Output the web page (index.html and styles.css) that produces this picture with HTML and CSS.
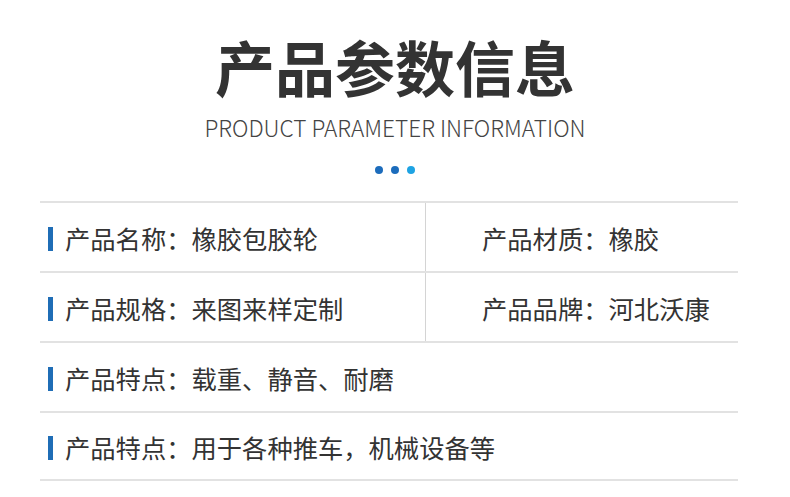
FILE: index.html
```html
<!DOCTYPE html>
<html lang="zh-CN">
<head>
<meta charset="utf-8">
<link rel="stylesheet" href="styles.css">
</head>
<body>
<div class="page">
  <header class="head">
    <h1 class="title">产品参数信息</h1>
    <p class="subtitle">PRODUCT PARAMETER INFORMATION</p>
    <div class="dots"><span class="dot"></span><span class="dot"></span><span class="dot light"></span></div>
  </header>
  <div class="table">
    <div class="row split">
      <div class="cell"><span class="bar"></span><span class="txt">产品名称：橡胶包胶轮</span></div>
      <div class="cell right"><span class="txt">产品材质：橡胶</span></div>
    </div>
    <div class="row split">
      <div class="cell"><span class="bar"></span><span class="txt">产品规格：来图来样定制</span></div>
      <div class="cell right"><span class="txt">产品品牌：河北沃康</span></div>
    </div>
    <div class="row">
      <div class="cell"><span class="bar"></span><span class="txt">产品特点：载重、静音、耐磨</span></div>
    </div>
    <div class="row last">
      <div class="cell"><span class="bar"></span><span class="txt">产品特点：用于各种推车，机械设备等</span></div>
    </div>
  </div>
</div>
</body>
</html>
```

FILE: styles.css
```css
* { box-sizing: border-box; }
html, body { margin: 0; padding: 0; background: #fff; }
body { font-family: "Noto Sans CJK SC", "Noto Sans", sans-serif; color: #333; }
.page { width: 790px; height: 497px; overflow: hidden; }
.head { display: flex; flex-direction: column; align-items: center; padding-top: 36px; }
.title { margin: 0; font-size: 60px; line-height: 60px; font-weight: 700; color: #333; letter-spacing: 0; }
.subtitle { margin: 21px 0 0; font-size: 22.6px; line-height: 21px; font-weight: 300; color: #444; letter-spacing: 0; }
.dots { display: flex; gap: 8px; margin-top: 28px; }
.dot { width: 8px; height: 8px; border-radius: 50%; background: #1c6cbc; }
.dot.light { background: #1ea3e3; }
.table { margin: 27px 0 0 40px; width: 698px; }
.row { height: 70px; border-top: 2px solid #e2e2e2; display: flex; }
.row.last { border-bottom: 2px solid #e2e2e2; }
.cell { display: flex; align-items: center; padding-left: 8px; flex: 1; }
.split .cell:first-child { flex: 0 0 385px; }
.cell.right { border-left: 1px solid #d4d4d4; padding-left: 56px; }
.bar { width: 5px; height: 24px; background: #1f6db6; margin-right: 12px; margin-top: 4px; }
.txt { font-size: 25.3px; line-height: 25px; color: #333; margin-top: 2px; }
```
